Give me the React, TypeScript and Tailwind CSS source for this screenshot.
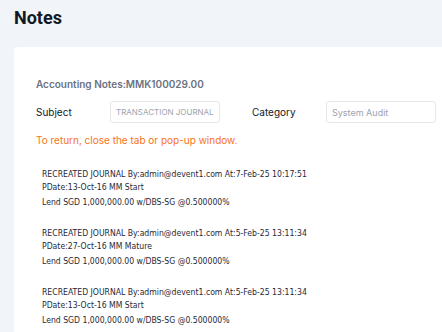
const notes = [
  { at: '7-Feb-25 10:17:51', pdate: '13-Oct-16 MM Start' },
  { at: '5-Feb-25 13:11:34', pdate: '27-Oct-16 MM Mature' },
  { at: '5-Feb-25 13:11:34', pdate: '13-Oct-16 MM Start' },
]

export default function App() {
  return (
    <div className="min-h-screen w-[442px] h-[332px] overflow-hidden bg-[#f1f4f8] font-['Inter',sans-serif]">
      <div className="pl-[14px] pt-[7px]">
        <h1 className="text-[18px] leading-[22px] font-bold text-[#111827] font-['Roboto',sans-serif]">Notes</h1>
      </div>

      <div className="ml-[14px] mt-[18px] bg-white rounded-tl-[4px] pl-[22px] pr-[6px] pt-[30px] h-[400px]">
        {/* Header */}
        <p className="text-[10px] leading-[14px] font-semibold text-[#6b7280]">Accounting Notes:MMK100029.00</p>

        <div className="flex items-center mt-[10px] text-[10px] text-[#111827]">
          <span className="w-[74px]">Subject</span>
          <input
            readOnly
            placeholder="TRANSACTION JOURNAL"
            className="w-[110px] h-[22px] px-[5px] border border-[#e5e7eb] rounded-[3px] text-[8px] placeholder:text-[#9ca3af] outline-none"
          />
          <span className="w-[74px] ml-[32px]">Category</span>
          <input
            readOnly
            placeholder="System Audit"
            className="w-[110px] h-[22px] px-[5px] border border-[#e5e7eb] rounded-[3px] text-[9px] placeholder:text-[#9ca3af] outline-none"
          />
        </div>

        <p className="mt-[10px] text-[10px] leading-[14px] text-[#f97316]">To return, close the tab or pop-up window.</p>

        {/* Notes */}
        <div className="mt-[21px] pl-[6px] space-y-[18px] font-['DejaVu_Sans_Condensed','DejaVu_Sans',sans-serif] [font-stretch:condensed] text-[8.6px] text-[#1f2937]">
          {notes.map((n, i) => (
            <div key={i} className="leading-[13px]">
              <p>RECREATED JOURNAL By:admin@devent1.com At:{n.at}</p>
              <p>PDate:{n.pdate}</p>
              <p className="mt-[2px]">Lend SGD 1,000,000.00 w/DBS-SG @0.500000%</p>
            </div>
          ))}
        </div>
      </div>
    </div>
  )
}
